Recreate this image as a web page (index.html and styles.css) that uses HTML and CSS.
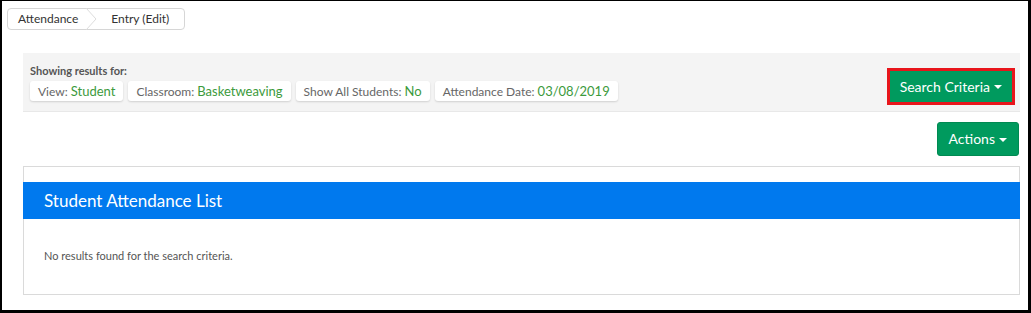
FILE: index.html
```html
<!DOCTYPE html>
<html>
<head>
<meta charset="utf-8">
<link rel="stylesheet" href="styles.css">
</head>
<body>
<div class="frame">
  <nav class="crumbs">
    <span class="crumb">Attendance</span>
    <svg class="crumb-sep" width="12" height="22" viewBox="0 0 12 22"><path d="M1 0 L11 11 L1 22" fill="none" stroke="#dcdcdc" stroke-width="1"/></svg>
    <span class="crumb crumb-last">Entry (Edit)</span>
  </nav>

  <section class="filters">
    <div class="filters-info">
      <div class="filters-title">Showing results for:</div>
      <div class="chips">
        <span class="chip">View: <b>Student</b></span>
        <span class="chip">Classroom: <b>Basketweaving</b></span>
        <span class="chip">Show All Students: <b>No</b></span>
        <span class="chip">Attendance Date: <b>03/08/2019</b></span>
      </div>
    </div>
    <button class="btn btn-search">Search Criteria <span class="caret"></span></button>
  </section>

  <div class="actions-row">
    <button class="btn btn-actions">Actions <span class="caret"></span></button>
  </div>

  <section class="card">
    <h2 class="card-head">Student Attendance List</h2>
    <p class="card-body">No results found for the search criteria.</p>
  </section>
</div>
</body>
</html>
```
FILE: styles.css
```css
* { box-sizing: border-box; }
html, body { margin: 0; padding: 0; background: #fff; }
body {
  width: 1031px;
  height: 313px;
  font-family: Lato, "Open Sans", sans-serif;
  color: #555;
}
.frame {
  height: 313px;
  border-style: solid;
  border-color: #000;
  border-width: 1px 3px 3px 2px;
  padding: 6px 8px 0 5px;
  overflow: hidden;
}
.crumbs {
  display: inline-flex;
  align-items: center;
  height: 22px;
  border: 1px solid #d6d6d6;
  border-radius: 4px;
  font-size: 12px;
  color: #333;
  padding: 0 0 0 10px;
}
.crumb-sep { margin: 0 0 0 7px; }
.crumb-last { padding: 0 15px 0 14px; }

.filters {
  margin: 23px 0 0 16px;
  height: 59px;
  background: #f4f4f4;
  border-bottom: 1px solid #e8e8e8;
  display: flex;
  align-items: center;
  justify-content: space-between;
  padding: 0 5px 0 7px;
}
.filters-info { display: flex; flex-direction: column; gap: 4px; padding-top: 1px; }
.filters-title { font-size: 11px; font-weight: 700; color: #555; line-height: 13px; }
.chips { display: flex; gap: 5px; }
.chip {
  background: #fff;
  border-radius: 3px;
  box-shadow: 0 1px 2px rgba(0,0,0,0.15);
  font-size: 12px;
  color: #666;
  padding: 0 8px;
  height: 20px;
  line-height: 20px;
  white-space: nowrap;
}
.chip b { font-weight: 400; font-size: 13px; color: #3c9a3c; }

.btn {
  font-family: Lato, "Open Sans", sans-serif;
  background: #009a5e;
  color: #fff;
  border: none;
  font-size: 14px;
  display: inline-flex;
  align-items: center;
  cursor: pointer;
}
.caret {
  display: inline-block;
  width: 0; height: 0;
  border-left: 4px solid transparent;
  border-right: 4px solid transparent;
  border-top: 4px solid #fff;
  margin-left: 4px;
  margin-top: 2px;
}
.btn-search {
  height: 37px;
  padding: 0 10px;
  border: 3px solid #e8151b;
  margin-top: 9px;
}
.actions-row {
  display: flex;
  justify-content: flex-end;
  padding: 10px 1px 0 0;
}
.btn-actions {
  height: 34px;
  padding: 0 11px;
  border-radius: 3px;
  border: 1px solid #008a52;
}

.card {
  margin: 10px 0 0 16px;
  border: 1px solid #dadada;
  height: 129px;
  padding-top: 15px;
}
.card-head {
  margin: 0 -1px;
  background: #0079ee;
  color: #fff;
  font-weight: 400;
  font-size: 17px;
  height: 37px;
  line-height: 37px;
  padding-left: 21px;
}
.card-body {
  margin: 30px 0 0 20px;
  font-size: 11px;
  color: #555;
}
```
